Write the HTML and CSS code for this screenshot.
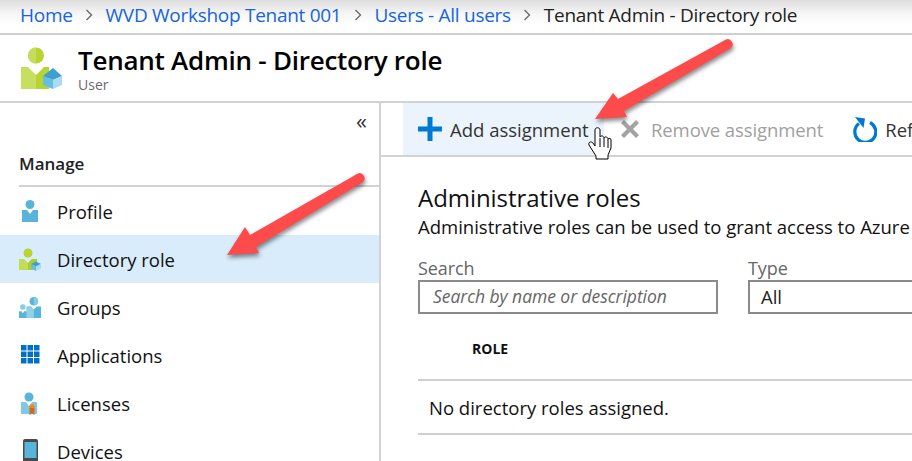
FILE: index.html
```html
<!DOCTYPE html>
<html lang="en">
<head>
<meta charset="utf-8">
<title>Tenant Admin - Directory role</title>
<link rel="stylesheet" href="styles.css">
</head>
<body>
<div class="page">
  <nav class="crumbs">
    <a class="crumb">Home</a>
    <svg class="chev" viewBox="0 0 8 12"><path d="M1.500 1l5 5-5 5" fill="none" stroke="#666" stroke-width="1.300"/></svg>
    <a class="crumb">WVD Workshop Tenant 001</a>
    <svg class="chev" viewBox="0 0 8 12"><path d="M1.500 1l5 5-5 5" fill="none" stroke="#666" stroke-width="1.300"/></svg>
    <a class="crumb">Users - All users</a>
    <svg class="chev" viewBox="0 0 8 12"><path d="M1.500 1l5 5-5 5" fill="none" stroke="#666" stroke-width="1.300"/></svg>
    <span class="crumb-current">Tenant Admin - Directory role</span>
  </nav>
  <header class="head">
    <svg class="head-icon" viewBox="0 0 41 42">
      <circle cx="15" cy="8.500" r="8" fill="#b8d432"/>
      <path d="M15 .5a8 8 0 0 0 0 16z" fill="#c6dd5c"/>
      <path d="M0 20h7l8 8v14H0z" fill="#c7df5e"/>
      <path d="M15 28l8-8h5v22H15z" fill="#b8d432"/>
      <path d="M22 29l10-8 9 8-9 4z" fill="#3f9fcf"/>
      <path d="M22 29l10 4v9l-10-4z" fill="#66bde3"/>
      <path d="M41 29l-9 4v9l9-4z" fill="#a9dcf1"/>
    </svg>
    <div class="head-text">
      <h1 class="title">Tenant Admin - Directory role</h1>
      <div class="subtitle">User</div>
    </div>
  </header>
  <div class="body">
    <aside class="side">
      <div class="collapse">«</div>
      <div class="manage">Manage</div>
      <ul class="menu">
        <li class="item">
          <svg class="ico" viewBox="0 0 22 24"><circle cx="11" cy="5.500" r="4.500" fill="#59b4d9"/><path d="M3 11h5l3 4 3-4h5v12H3z" fill="#59b4d9"/></svg>
          <span>Profile</span>
        </li>
        <li class="item active">
          <svg class="ico" viewBox="0 0 22 24"><circle cx="9" cy="6" r="4.500" fill="#b8d432"/><path d="M0 12h5l4 4 4-4h5v11H0z" fill="#c5dc56"/><path d="M9 16l4-4h5v11H9z" fill="#b0cc2a"/><path d="M12 17l5-2.500 5 2.500-5 2.500z" fill="#3f9fcf"/><path d="M12 17l5 2.500V24l-5-2.500z" fill="#66bde3"/><path d="M22 17l-5 2.500V24l5-2.500z" fill="#a9dcf1"/></svg>
          <span>Directory role</span>
        </li>
        <li class="item">
          <svg class="ico" viewBox="0 0 23 23"><circle cx="15.500" cy="5.500" r="4.500" fill="#59b4d9"/><path d="M15.500 1a4.500 4.500 0 0 1 0 9z" fill="#85cbe8"/><path d="M8 11h4.500l3 3 3-3H23v12H8z" fill="#59b4d9"/><path d="M8 11h4.500l3 3v9H8z" fill="#8fd0ea"/><circle cx="4" cy="11.500" r="2.800" fill="#85cbe8"/><path d="M0 16h2.500L4 18l1.500-2H8v7H0z" fill="#59b4d9"/></svg>
          <span>Groups</span>
        </li>
        <li class="item">
          <svg class="ico" viewBox="0 0 22 22"><path d="M2 1h5.500v5.500H2zM8.500 1H14v5.500H8.500zM15 1h5.500v5.500H15zM2 7.500h5.500V13H2zM8.500 7.500H14V13H8.500zM15 7.500h5.500V13H15zM2 14h5.500v5.500H2zM8.500 14H14v5.500H8.500zM15 14h5.500v5.500H15z" fill="#0072c6"/></svg>
          <span>Applications</span>
        </li>
        <li class="item">
          <svg class="ico" viewBox="0 0 22 24"><circle cx="10" cy="6" r="4.500" fill="#59b4d9"/><path d="M2 11h5l3 4 3-4h5v12H2z" fill="#7fc8e6"/><circle cx="13" cy="16" r="2.800" fill="#f08a1d"/><path d="M10.500 17h5v7L13 22.500 10.500 24z" fill="#d9661f"/></svg>
          <span>Licenses</span>
        </li>
        <li class="item">
          <svg class="ico" viewBox="0 0 22 24"><rect x="4" y="0" width="15" height="24" rx="2" fill="#4a4a4a"/><rect x="5.500" y="3" width="12" height="16" fill="#59b4d9"/></svg>
          <span>Devices</span>
        </li>
      </ul>
    </aside>
    <main class="main">
      <div class="toolbar">
        <button class="tool tool-on">
          <svg class="tool-ico" viewBox="0 0 24 24"><path d="M9.500 0h5v9.500H24v5h-9.500V24h-5v-9.500H0v-5h9.500z" fill="#0078d4"/></svg>
          <span>Add assignment</span>
        </button>
        <button class="tool tool-off">
          <svg class="tool-ico-x" viewBox="0 0 22 22"><path d="M2 5l3-3 6 6 6-6 3 3-6 6 6 6-3 3-6-6-6 6-3-3 6-6z" fill="#a3a3a3"/></svg>
          <span>Remove assignment</span>
        </button>
        <button class="tool tool-ref">
          <svg class="tool-ico-r" viewBox="0 0 24 26"><path d="M6 7.500a10.500 10.500 0 1 0 11 -1" fill="none" stroke="#0078d4" stroke-width="3.200"/><path d="M2 1l10 1.500-1.500 9.500z" fill="#0078d4"/></svg>
          <span>Refresh</span>
        </button>
      </div>
      <div class="content">
        <h2 class="sec-title">Administrative roles</h2>
        <p class="sec-desc">Administrative roles can be used to grant access to Azure</p>
        <div class="filters">
          <label class="field field-search">
            <span class="field-label">Search</span>
            <span class="input input-ph">Search by name or description</span>
          </label>
          <label class="field field-type">
            <span class="field-label">Type</span>
            <span class="input input-val">All</span>
          </label>
        </div>
        <div class="th">ROLE</div>
        <div class="empty">No directory roles assigned.</div>
      </div>
    </main>
  </div>
  <svg class="overlay" viewBox="0 0 912 461">
    <path class="arrow" d="M725.500 39.700L618 99l-5-6-18 26 32-2-3-6L730.500 48.300A5 5 0 0 0 725.500 39.700z"/>
    <path class="arrow" d="M357.500 173.700L250 235l-5-8-18 28 32-2-3-6L362.500 182.300A5 5 0 0 0 357.500 173.700z"/>
    <path class="hand" d="M595 130c0-3 5-3 5 0v7c1-2 4-1 4 1 1-2 4-1 4 1 1-1 3-1 3 1v8l-3 7v4h-12v-3l-7-11c-1-3 2-4 4-2l2 3z"/>
    <path class="hand" d="M600 138v9M604 138v9M608 139v9"/>
  </svg>
</div>
</body>
</html>
```
FILE: styles.css
```css
* { box-sizing: border-box; }
html, body { margin: 0; padding: 0; }
body { width: 912px; height: 461px; overflow: hidden; background: #fff; font-family: "Open Sans", "Noto Sans", sans-serif; color: #111; }
.page { position: relative; width: 912px; height: 461px; overflow: hidden; display: flex; flex-direction: column; }

.crumbs { height: 35px; flex: none; display: flex; align-items: center; padding: 0 0 4px 20px; font-size: 19px; letter-spacing: -0.280px; background: linear-gradient(#dedede 0, #f6f6f6 14px, #fff 24px); border-bottom: 2px solid #cfcfcf; white-space: nowrap; }
.crumb { color: #1564e0; }
.crumb-current { color: #222; }
.chev { width: 8px; height: 12px; margin: 0 12.500px; flex: none; }

.head { height: 68px; flex: none; display: flex; align-items: flex-start; padding: 10px 0 0 21px; border-bottom: 2px solid #d2d2d2; }
.head-icon { width: 41px; height: 42px; margin-top: 2px; flex: none; }
.head-text { margin-left: 16px; }
.title { margin: 0; font-size: 26px; line-height: 31px; font-weight: 600; color: #000; letter-spacing: -0.250px; white-space: nowrap; }
.subtitle { font-size: 14px; line-height: 18px; color: #6a6a6a; }

.body { flex: 1; display: flex; min-height: 0; }
.side { width: 381px; flex: none; border-right: 2px solid #d2d2d2; display: flex; flex-direction: column; }
.collapse { height: 37px; flex: none; text-align: right; padding: 2px 12px 0 0; font-size: 22px; line-height: 30px; color: #333; }
.manage { margin-left: 19px; height: 47px; flex: none; padding-top: 13px; border-bottom: 2px solid #d2d2d2; font-size: 17px; line-height: 22px; font-weight: 600; color: #222; }
.menu { list-style: none; margin: 0; padding: 0; flex: none; }
.item { height: 48px; display: flex; align-items: center; padding-left: 19px; font-size: 18.500px; color: #111; }
.item.active { background: #d9ecfc; }
.ico { width: 22px; height: 24px; margin-right: 16px; flex: none; }

.main { flex: 1; min-width: 0; }
.toolbar { height: 54px; display: flex; align-items: stretch; padding: 0 0 0 22px; border-bottom: 2px solid #d2d2d2; white-space: nowrap; }
.tool { border: 0; background: none; padding: 0; margin: 0; display: flex; align-items: center; font: inherit; font-size: 18.500px; color: #333; flex: none; }
.tool-on { width: 201px; padding-left: 15px; background: #ebf4fd; }
.tool-off { margin-left: 15px; color: #a0a0a0; letter-spacing: -0.100px; }
.tool-ref { margin-left: 30px; }
.tool-ico { width: 24px; height: 24px; margin-right: 8px; }
.tool-ico-x { width: 22px; height: 22px; margin-right: 10px; }
.tool-ico-r { width: 24px; height: 26px; margin-right: 8px; }

.content { padding: 25px 0 0 37px; }
.sec-title { margin: 0; font-size: 24px; line-height: 32px; font-weight: 400; color: #111; white-space: nowrap; letter-spacing: -0.050px; }
.sec-desc { margin: 0; font-size: 18.500px; line-height: 26px; color: #111; white-space: nowrap; }
.filters { display: flex; gap: 30px; margin-top: 17px; }
.field { display: flex; flex-direction: column; flex: none; }
.field-search { width: 300px; }
.field-type { width: 400px; }
.field-label { font-size: 18px; line-height: 23px; color: #666; letter-spacing: -0.100px; }
.input { height: 34px; border: 2px solid #8a8a8a; padding: 0 0 0 13px; font-size: 18.500px; line-height: 29px; color: #222; }
.input-ph { font-size: 17.500px; font-style: italic; color: #666; letter-spacing: -0.050px; white-space: nowrap; }
.input-val { padding-left: 11px; }
.th { margin-top: 20px; height: 47px; padding: 5px 0 0 54px; border-bottom: 2px solid #cfcfcf; font-size: 14px; line-height: 20px; font-weight: 700; color: #111; width: 700px; }
.empty { height: 54px; padding: 0 0 0 11px; display: flex; align-items: center; border-bottom: 2px solid #cfcfcf; font-size: 18.500px; color: #111; width: 700px; }

.overlay { position: absolute; left: 0; top: 0; width: 912px; height: 461px; pointer-events: none; }
.arrow { fill: #fd4a4a; filter: drop-shadow(1px 3px 2px rgba(0,0,0,.45)); }
.hand { fill: #fff; stroke: #000; stroke-width: 1; }
```
